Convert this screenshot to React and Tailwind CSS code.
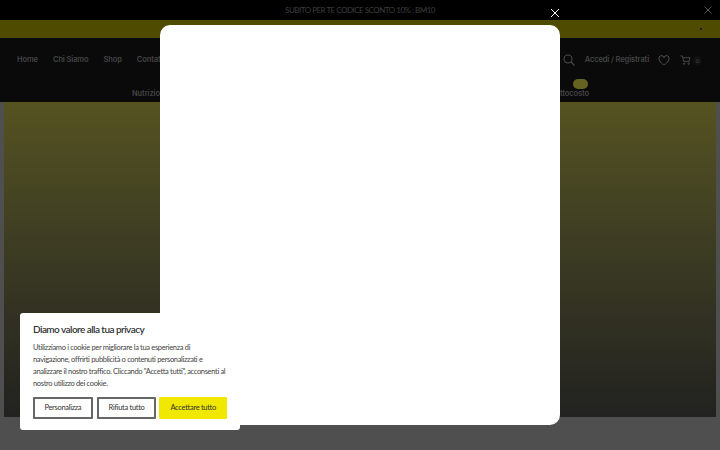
const font = { fontFamily: '"Lato", "Liberation Sans", sans-serif' };

function NavLink({ children }) {
  return <a className="text-[#444444] text-[7.5px] tracking-[-0.1px] font-semibold font-['Inter',sans-serif] whitespace-nowrap">{children}</a>;
}

function Header() {
  return (
    <header className="shrink-0">
      <div className="relative h-5 bg-black flex items-center justify-center text-[#3d3d3d] text-[8px] tracking-[-0.5px] font-['Lato',sans-serif]">
        SUBITO PER TE CODICE SCONTO 10% : BM10
        <svg className="absolute right-[8px] top-[6px] text-[#555]" width="8" height="8" viewBox="0 0 8 8" fill="none" stroke="currentColor" strokeWidth="1">
          <path d="M.5.5l7 7M7.5.5l-7 7" />
        </svg>
      </div>
      <div className="relative h-[18px] bg-[#4f4b00]">
        <span className="absolute right-[18px] top-[8px] w-[2px] h-[2px] bg-[#222]" />
      </div>
      <div className="h-[64px] bg-[#0a0a0a] flex flex-col">
        <div className="h-[40px] pt-[4px] flex items-center justify-between pl-[17px] pr-[18px]">
          <nav className="flex items-center gap-[15px]">
            <NavLink>Home</NavLink>
            <NavLink>Chi Siamo</NavLink>
            <NavLink>Shop</NavLink>
            <NavLink>Contatti</NavLink>
          </nav>
          <div className="flex items-center">
            <svg className="text-[#4a4a4a] mr-[10px]" width="12" height="12" viewBox="0 0 12 12" fill="none" stroke="currentColor" strokeWidth="1.1">
              <circle cx="5" cy="5" r="4" />
              <path d="M8 8l3.5 3.5" />
            </svg>
            <NavLink>Accedi / Registrati</NavLink>
            <svg className="text-[#4f4f4f] ml-[9px]" width="12" height="11" viewBox="0 0 24 22" fill="none" stroke="currentColor" strokeWidth="2">
              <path d="M12 20S2 14 2 7a5 5 0 0 1 10-1.5A5 5 0 0 1 22 7c0 7-10 13-10 13z" />
            </svg>
            <svg className="text-[#4f4f4f] ml-[10px]" width="11" height="10" viewBox="0 0 24 22" fill="none" stroke="currentColor" strokeWidth="2">
              <path d="M1 2h4l3 12h12l2-8H6" />
              <circle cx="9" cy="19" r="1.5" />
              <circle cx="19" cy="19" r="1.5" />
            </svg>
            <span className="ml-[2px] w-[9px] h-[9px] rounded-full bg-[#111] text-[#444] text-[6px] flex items-center justify-center">0</span>
          </div>
        </div>
        <div className="flex-1 flex items-start justify-between pl-[132px] pr-[131px] pt-[10px]">
          <NavLink>Nutrizione</NavLink>
          <div className="relative flex">
            <span className="absolute right-[1px] -top-[9px] w-[15px] h-[10px] rounded-full bg-[#66621f]" />
            <NavLink>Sottocosto</NavLink>
          </div>
        </div>
      </div>
    </header>
  );
}

export default function App() {
  return (
    <div className="relative w-[720px] h-[450px] overflow-hidden bg-[#4f4f4f] flex flex-col" style={font}>
      <Header />
      <main className="px-[4px] h-[315px] shrink-0">
        <div className="h-full bg-gradient-to-b from-[#555320] to-[#222220]" />
      </main>

      <div className="absolute left-[160px] top-[25px] w-[400px] h-[400px] bg-white rounded-[10px]" />
      <svg className="absolute left-[550px] top-[8px] text-white" width="10" height="10" viewBox="0 0 10 10" fill="none" stroke="currentColor" strokeWidth="1">
        <path d="M1 1l8 8M9 1L1 9" />
      </svg>

      <section className="absolute left-[20px] top-[313px] w-[220px] h-[117px] bg-white rounded-[3px] px-[13px] pt-[10px] text-[#333]">
        <h2 className="text-[10px] leading-[13px] font-semibold tracking-[-0.55px] text-[#333] m-0">Diamo valore alla tua privacy</h2>
        <p className="mt-[6px] text-[7.5px] leading-[12px] tracking-[-0.33px] text-[#444] whitespace-nowrap">
          Utilizziamo i cookie per migliorare la tua esperienza di<br />
          navigazione, offrirti pubblicità o contenuti personalizzati e<br />
          analizzare il nostro traffico. Cliccando "Accetta tutti", acconsenti al<br />
          nostro utilizzo dei cookie.
        </p>
        <div className="mt-[7px] flex gap-[3px] text-[7.5px] tracking-[-0.3px] text-[#333]">
          <button className="w-[60px] h-[22px] mr-[1px] border-2 border-[#666] rounded-[1px] bg-white">Personalizza</button>
          <button className="w-[60px] h-[22px] border-2 border-[#666] rounded-[1px] bg-white">Rifiuta tutto</button>
          <button className="w-[68px] h-[22px] bg-[#f0e800] rounded-[1px]">Accettare tutto</button>
        </div>
      </section>
    </div>
  );
}
